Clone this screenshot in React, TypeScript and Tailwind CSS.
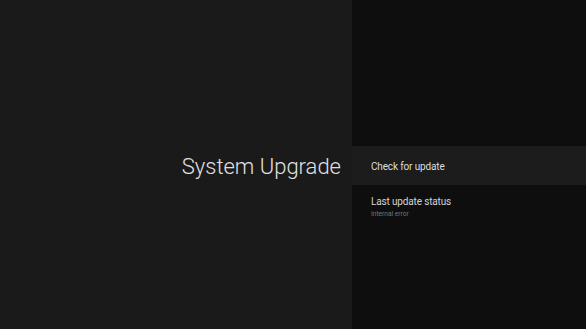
export default function App() {
  return (
    <div
      className="flex h-[329px] w-[586px] overflow-hidden"
      style={{ fontFamily: "Roboto, 'Liberation Sans', sans-serif" }}
    >
      {/* Title pane */}
      <div className="flex w-[352px] items-center justify-end bg-[#1a1a1a] pr-[11px] pt-[4px]">
        <h1 className="text-[22px] font-light leading-none text-[#e0e0e0]">
          System Upgrade
        </h1>
      </div>

      {/* Actions pane */}
      <div className="flex flex-1 flex-col bg-[#0e0e0e] pt-[146px]">
        <div className="flex h-[39px] items-center bg-[#1c1c1c] pl-[19px] pt-[2px]">
          <span className="text-[10px] tracking-[-0.15px] text-[#dcdcdc]">Check for update</span>
        </div>
        <div className="flex flex-col pl-[19px] pt-[10px]">
          <span className="text-[10px] leading-[14px] tracking-[-0.15px] text-[#d4d4d4]">
            Last update status
          </span>
          <span className="text-[6.6px] leading-[10px] text-[#777]">Internal error</span>
        </div>
      </div>
    </div>
  );
}
